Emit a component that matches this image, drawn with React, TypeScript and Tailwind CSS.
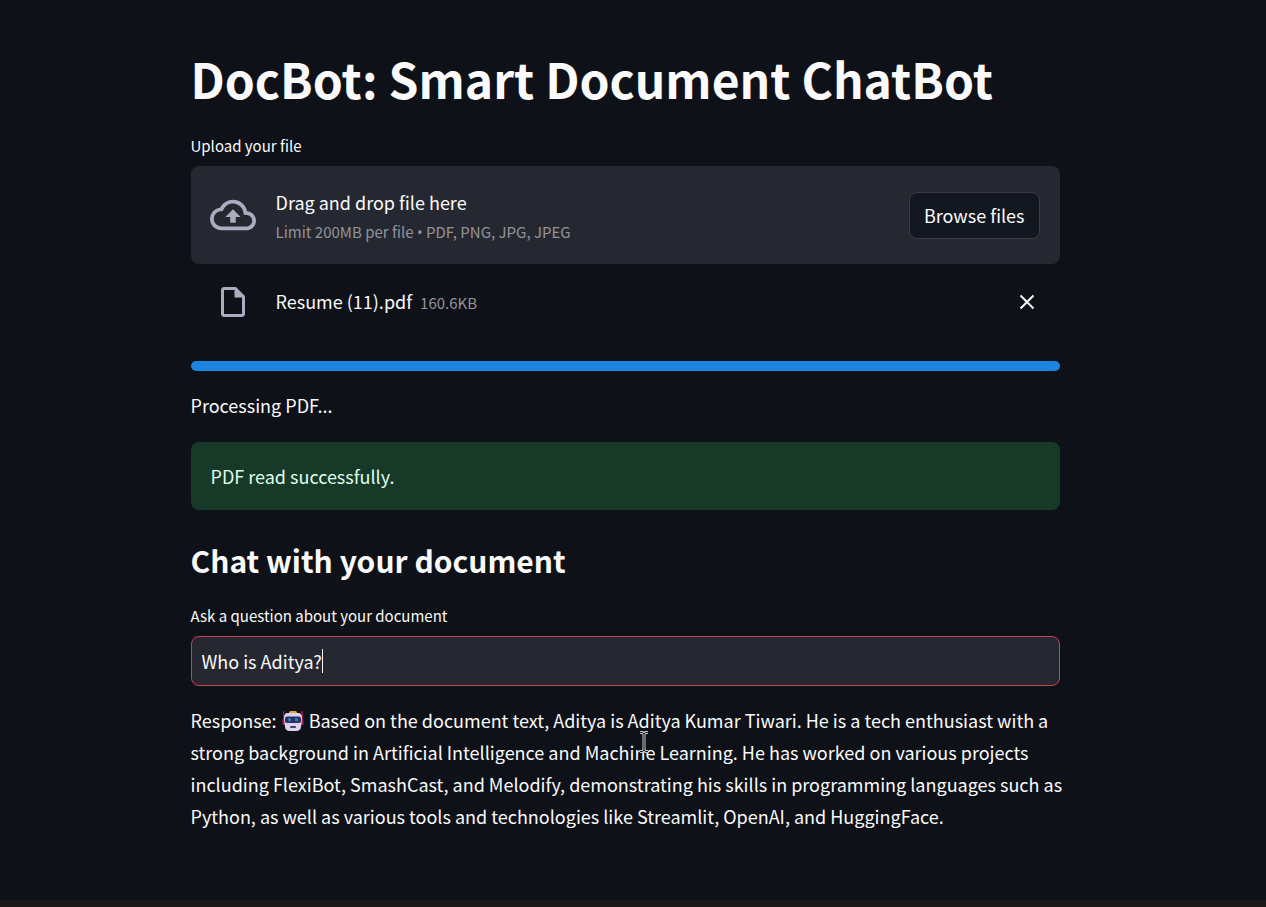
import { useState } from "react";

function CloudUploadIcon() {
  return (
    <svg viewBox="0 0 24 24" className="h-[46px] w-[46px] shrink-0" fill="#a9adc0" aria-hidden="true">
      <path d="M19.35 10.04A7.49 7.49 0 0 0 12 4C9.11 4 6.6 5.64 5.35 8.04A5.994 5.994 0 0 0 0 14c0 3.31 2.69 6 6 6h13c2.76 0 5-2.24 5-5 0-2.64-2.05-4.78-4.65-4.96zM19 18H6c-2.21 0-4-1.79-4-4 0-2.05 1.53-3.76 3.56-3.97l1.07-.11.5-.95A5.469 5.469 0 0 1 12 6c2.62 0 4.88 1.86 5.39 4.43l.3 1.5 1.53.11A2.98 2.98 0 0 1 22 15c0 1.65-1.35 3-3 3zM8 13h2.55v3h2.9v-3H16l-4-4z" />
    </svg>
  );
}

function FileIcon() {
  return (
    <svg viewBox="0 0 24 24" className="h-9 w-9" fill="#a9adc0" aria-hidden="true">
      <path d="M14 2H6c-1.1 0-1.99.9-1.99 2L4 20c0 1.1.89 2 1.99 2H18c1.1 0 2-.9 2-2V8l-6-6zM6 20V4h7v5h5v11H6z" />
    </svg>
  );
}

function RobotIcon() {
  return (
    <svg viewBox="0 0 22 22" className="mx-px inline-block h-[22px] w-[22px] align-[-4px]" role="img" aria-label="Robot">
      <rect x="1" y="1" width="1.500" height="12" rx=".7" fill="#8f1f4b" />
      <rect x="19.500" y="1" width="1.500" height="12" rx=".7" fill="#8f1f4b" />
      <rect x="0.5" y="9" width="3" height="6" rx="1" fill="#a82555" />
      <rect x="18.5" y="9" width="3" height="6" rx="1" fill="#a82555" />
      <rect x="7" y="1" width="8" height="4" rx="1.5" fill="#e8a33a" />
      <path d="M6 3h10c3 0 4 2 4 5l-1 9c-.4 2.500-2 4-4.500 4h-7C5 21 3.400 19.500 3 17L2 8c0-3 1-5 4-5z" fill="#ddd3ec" />
      <rect x="3" y="6.500" width="16" height="6.500" rx="2" fill="#28325f" />
      <circle cx="7.500" cy="9.700" r="1.700" fill="#3277b8" />
      <circle cx="14.500" cy="9.700" r="1.700" fill="#3277b8" />
      <rect x="8" y="16" width="6" height="2" rx="1" fill="#493b6b" />
    </svg>
  );
}

function TextPointer() {
  return (
    <svg viewBox="0 0 10 22" className="pointer-events-none absolute top-[27px] left-[448px] h-[22px] w-[10px]" fill="none" aria-hidden="true">
      <path d="M1 1.500h2.500L5 3l1.500-1.500H9M5 3v16M1 20.500h2.500L5 19l1.500 1.500H9" stroke="#c4c6c9" strokeWidth="3" />
      <path d="M1 1.500h2.500L5 3l1.500-1.500H9M5 3v16M1 20.500h2.500L5 19l1.500 1.500H9" stroke="#111" strokeWidth="1" />
    </svg>
  );
}

function FileUploader() {
  const [showFile, setShowFile] = useState(true);
  return (
    <section>
      <h2 id="upload-label" className="text-[15px] leading-6">Upload your file</h2>
      <div aria-labelledby="upload-label" role="group" className="mt-2 flex items-center rounded-lg bg-[#262831] py-[22px] pr-5 pl-[19px]">
        <CloudUploadIcon />
        <div className="ml-5 flex-1 pt-[2px]">
          <p className="text-lg leading-6">Drag and drop file here</p>
          <p className="mt-2 text-[15px] leading-5 text-[#92939a]">
            Limit 200MB per file <span className="font-['Noto_Sans',sans-serif] leading-none">•</span> PDF, PNG, JPG, JPEG
          </p>
        </div>
        <button type="button" className="h-[47px] rounded-lg border border-[#3a3c45] bg-[#131720] px-[14px] text-lg leading-6">
          Browse files
        </button>
      </div>
      {showFile && (
        <div className="flex items-center py-5 pr-5 pl-6">
          <FileIcon />
          <p className="ml-[25px] flex flex-1 items-baseline gap-2 pb-[2px] text-lg leading-8">
            <span>Resume (11).pdf</span>
            <small className="text-[15px] leading-none text-[#92939a]">160.6KB</small>
          </p>
          <button type="button" aria-label="Remove file" onClick={() => setShowFile(false)} className="p-1">
            <svg viewBox="0 0 18 18" className="h-[18px] w-[18px]" stroke="#fafafa" strokeWidth="2" aria-hidden="true">
              <path d="M2.500 2.500l13 13M15.500 2.500l-13 13" />
            </svg>
          </button>
        </div>
      )}
    </section>
  );
}

export default function App() {
  const [question, setQuestion] = useState("Who is Aditya?");
  return (
    <div className="flex min-h-screen flex-col bg-[#0e1117] font-['Noto_Sans_CJK_SC','Noto_Sans',sans-serif] text-[#fafafa]">
      <main className="flex-1 pr-4">
        <div className="mx-auto max-w-[869px] pt-[46px] pb-16">
          <h1 className="text-5xl leading-[64px] font-bold">DocBot: Smart Document ChatBot</h1>
          <div className="mt-6">
            <FileUploader />
          </div>
          <div role="progressbar" aria-label="Processing PDF" aria-valuenow={100} className="mt-[21px] h-[10px] rounded-full bg-[#1c83e1]" />
          <p className="mt-[18px] text-lg leading-8">Processing PDF...</p>
          <div role="status" className="mt-[21px] rounded-lg bg-[#173928] px-5 py-[18px] text-lg leading-8 text-[#dffde9]">
            PDF read successfully.
          </div>
          <h2 className="mt-7 text-3xl leading-[44px] font-semibold">Chat with your document</h2>
          <label htmlFor="question" className="mt-[22px] block text-[15px] leading-6">
            Ask a question about your document
          </label>
          <div className="relative mt-2">
            <input
              id="question"
              type="text"
              value={question}
              onChange={(e) => setQuestion(e.target.value)}
              className="block h-[50px] w-full rounded-lg border border-[#c9444a] bg-[#262831] px-[10px] text-lg leading-6 caret-transparent outline-none"
            />
            <div aria-hidden="true" className="pointer-events-none absolute inset-y-0 left-[11px] flex items-center text-lg leading-6">
              <span className="invisible whitespace-pre">{question}</span>
              <span className="h-6 w-px bg-[#fafafa]" />
            </div>
          </div>
          <div className="relative mt-[18px]">
            <p className="-mr-2 text-lg leading-8">
              Response: <RobotIcon /> Based on the document text, Aditya is Aditya Kumar Tiwari. He is a tech enthusiast
              with a strong background in Artificial Intelligence and Machine Learning. He has worked on various
              projects including FlexiBot, SmashCast, and Melodify, demonstrating his skills in programming languages
              such as Python, as well as various tools and technologies like Streamlit, OpenAI, and HuggingFace.
            </p>
            <TextPointer />
          </div>
        </div>
      </main>
      <footer className="h-[7px] bg-[#1a1819]" />
    </div>
  );
}
